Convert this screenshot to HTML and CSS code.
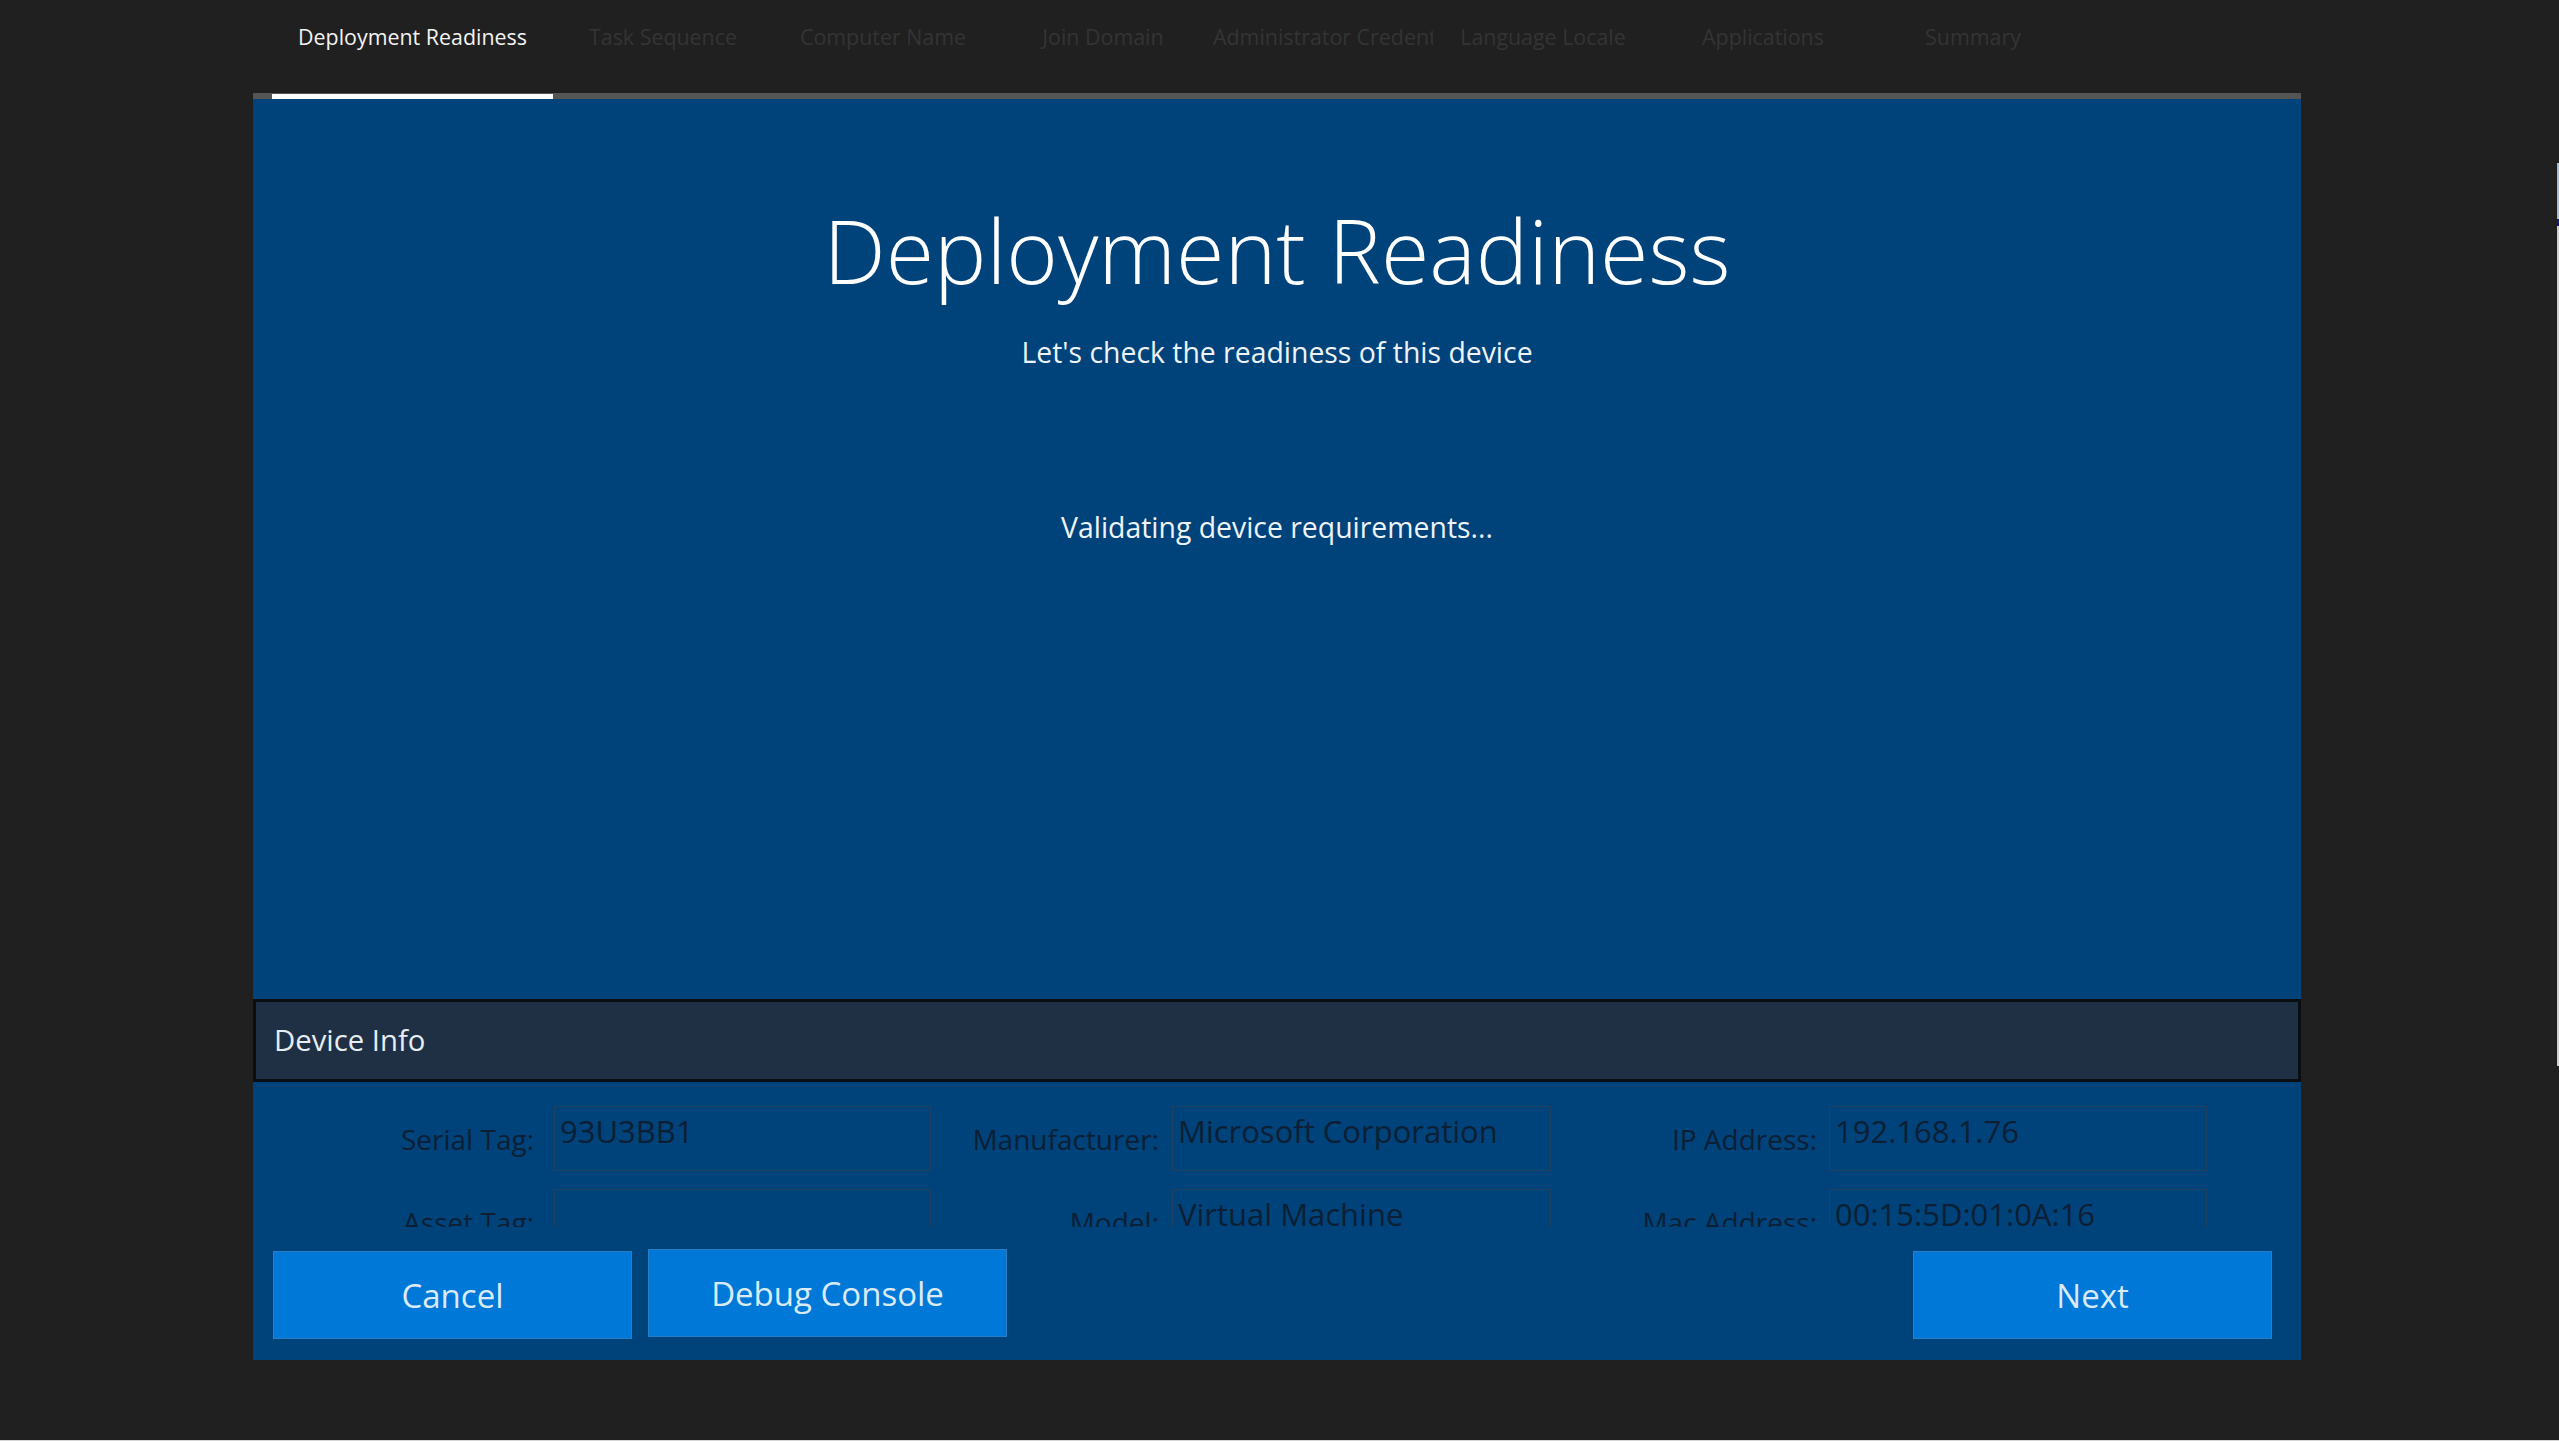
FILE: index.html
```html
<!DOCTYPE html>
<html lang="en">
<head>
<meta charset="utf-8">
<title>Deployment Readiness</title>
<link rel="stylesheet" href="styles.css">
</head>
<body>
<div class="screen">
  <div class="wizard">
    <nav class="tabs">
      <div class="tab tab-first active">Deployment Readiness</div>
      <div class="tab">Task Sequence</div>
      <div class="tab">Computer Name</div>
      <div class="tab">Join Domain</div>
      <div class="tab">Administrator Credentials</div>
      <div class="tab">Language Locale</div>
      <div class="tab">Applications</div>
      <div class="tab tab-last">Summary</div>
    </nav>
    <div class="track"><div class="indicator"></div></div>
    <main class="panel">
      <section class="hero">
        <h1 class="title">Deployment Readiness</h1>
        <p class="subtitle">Let's check the readiness of this device</p>
        <p class="status">Validating device requirements...</p>
      </section>
      <div class="info-header">Device Info</div>
      <div class="info-body">
        <div class="info-grid">
          <div class="label label-a">Serial Tag:</div><div class="field">93U3BB1</div>
          <div class="label label-b">Manufacturer:</div><div class="field">Microsoft Corporation</div>
          <div class="label label-c">IP Address:</div><div class="field">192.168.1.76</div>
          <div class="label label-a">Asset Tag:</div><div class="field"></div>
          <div class="label label-b">Model:</div><div class="field">Virtual Machine</div>
          <div class="label label-c">Mac Address:</div><div class="field">00:15:5D:01:0A:16</div>
        </div>
      </div>
      <div class="actions">
        <button class="btn btn-low">Cancel</button>
        <button class="btn">Debug Console</button>
        <span class="spacer"></span>
        <button class="btn btn-low">Next</button>
      </div>
    </main>
  </div>
  <div class="edge-window"></div>
</div>
</body>
</html>
```

FILE: styles.css
```css
* { box-sizing: border-box; }

html, body {
  margin: 0;
  padding: 0;
  background: #202020;
}

body {
  font-family: "Open Sans", "Noto Sans", "Liberation Sans", sans-serif;
}

.screen {
  position: relative;
  width: 2559px;
  height: 1441px;
  border-bottom: 1px solid #d6d6d6;
  overflow: hidden;
}

.wizard {
  margin-left: 253px;
  width: 2048px;
}

/* tabs */
.tabs {
  display: flex;
  height: 93px;
  padding-left: 19px;
  padding-top: 22px;
}

.tab {
  width: 220px;
  flex: none;
  font-size: 21.4px;
  line-height: 30px;
  height: 30px;
  color: #343434;
  text-align: center;
  white-space: nowrap;
  overflow: hidden;
}

.tab-first { width: 281px; }
.tab-last { width: 200px; }

.tab.active { color: #f2f2f2; }

.track {
  height: 6px;
  background: #555555;
  padding-left: 19px;
  padding-top: 1px;
}

.indicator {
  width: 281px;
  height: 5px;
  background: #ffffff;
}

/* panel */
.panel {
  background: #00427a;
  display: flex;
  flex-direction: column;
}

.hero {
  height: 900px;
  padding-top: 107px;
  text-align: center;
  color: #ffffff;
}

.title {
  margin: 0;
  font-size: 88px;
  font-weight: 300;
  line-height: 1;
}

.subtitle {
  margin: 44px 0 0;
  font-size: 28.4px;
  line-height: 1;
  color: #eef3f8;
}

.status {
  margin: 147px 0 0;
  font-size: 28.4px;
  line-height: 1;
  color: #eef3f8;
}

.info-header {
  height: 83px;
  border: 3px solid #0a0e13;
  background: #1f3045;
  color: #e6edf4;
  font-size: 29.3px;
  line-height: 1.2;
  padding-left: 18px;
  display: flex;
  align-items: center;
}

.info-body {
  height: 145px;
  overflow: hidden;
  padding-top: 24px;
}

.info-grid {
  display: grid;
  grid-template-columns: 301px 377px 241px 379px 278px 378px;
  grid-auto-rows: 65px;
  row-gap: 18px;
}

.label {
  text-align: right;
  padding-top: 17px;
  font-size: 28px;
  line-height: 1.2;
  color: #0c1f34;
  white-space: nowrap;
}

.label-a { padding-right: 20px; }
.label-b { padding-right: 13px; }
.label-c { padding-right: 12px; }

.field {
  border: 1px solid #22405f;
  padding: 6px 0 0 5px;
  font-size: 31px;
  line-height: 1.2;
  color: #0c1f34;
  white-space: nowrap;
  overflow: hidden;
}

/* actions */
.actions {
  display: flex;
  align-items: flex-start;
  gap: 16px;
  padding: 22px 29px 21px 20px;
}

.spacer { flex: 1; }

.btn {
  width: 359px;
  height: 88px;
  background: #0078d7;
  border: 1px solid #2a7ec4;
  border-radius: 0;
  color: #dbeaf7;
  font-family: inherit;
  font-size: 33px;
  line-height: 1;
  padding: 0;
}

.btn-low { margin-top: 2px; }

/* sliver of another window at the far right edge */
.edge-window {
  position: absolute;
  right: 0;
  top: 163px;
  width: 2px;
  height: 903px;
  background: linear-gradient(#a9bcd4 0, #a9bcd4 56px, #16168a 56px, #16168a 63px, #cfcfcf 63px, #cfcfcf 100%);
}
```
